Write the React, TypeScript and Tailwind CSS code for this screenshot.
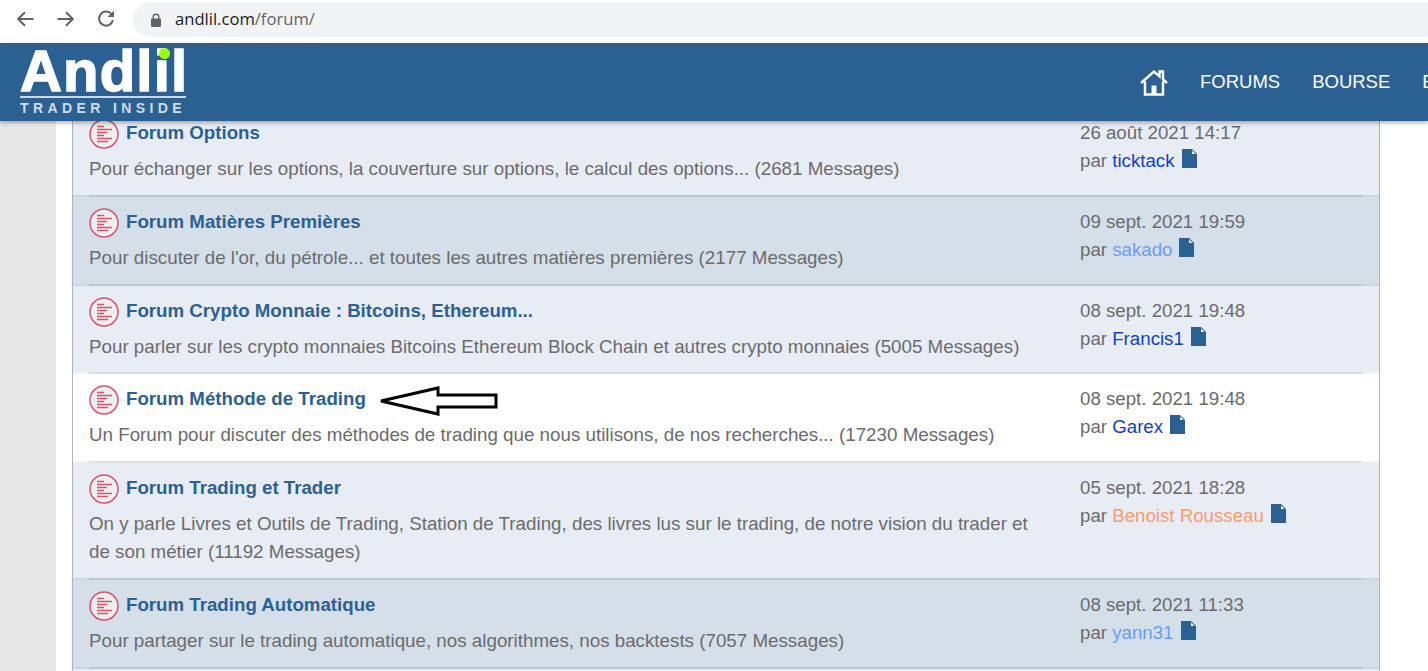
interface ForumRow {
  title: string;
  desc: string;
  date: string;
  user: string;
  userClass: string;
  bg: string;
  line: string;
  edge: string;
  rowHeight: string;
}

const ROWS: ForumRow[] = [
  {
    title: 'Forum Options',
    desc: 'Pour échanger sur les options, la couverture sur options, le calcul des options... (2681 Messages)',
    date: '26 août 2021 14:17',
    user: 'ticktack',
    userClass: 'text-[#1140c8]',
    bg: 'bg-[#e8edf5]',
    line: 'bg-[#b9c7d4]',
    edge: 'bg-[#c9d7e4]',
    rowHeight: 'h-[87px]',
  },
  {
    title: 'Forum Matières Premières',
    desc: "Pour discuter de l'or, du pétrole... et toutes les autres matières premières (2177 Messages)",
    date: '09 sept. 2021 19:59',
    user: 'sakado',
    userClass: 'text-[#6a9bff]',
    bg: 'bg-[#d5dfe9]',
    line: 'bg-[#b9c7d4]',
    edge: 'bg-[#c9d7e4]',
    rowHeight: 'h-[87px]',
  },
  {
    title: 'Forum Crypto Monnaie : Bitcoins, Ethereum...',
    desc: 'Pour parler sur les crypto monnaies Bitcoins Ethereum Block Chain et autres crypto monnaies (5005 Messages)',
    date: '08 sept. 2021 19:48',
    user: 'Francis1',
    userClass: 'text-[#1140c8]',
    bg: 'bg-[#e8edf5]',
    line: 'bg-[#d5dde5]',
    edge: 'bg-[#eef3f7]',
    rowHeight: 'h-[86px]',
  },
  {
    title: 'Forum Méthode de Trading',
    desc: 'Un Forum pour discuter des méthodes de trading que nous utilisons, de nos recherches... (17230 Messages)',
    date: '08 sept. 2021 19:48',
    user: 'Garex',
    userClass: 'text-[#1140c8]',
    bg: 'bg-white',
    line: 'bg-[#dfe3e8]',
    edge: 'bg-[#eef2f7]',
    rowHeight: 'h-[87px]',
  },
  {
    title: 'Forum Trading et Trader',
    desc: 'On y parle Livres et Outils de Trading, Station de Trading, des livres lus sur le trading, de notre vision du trader et de son métier (11192 Messages)',
    date: '05 sept. 2021 18:28',
    user: 'Benoist Rousseau',
    userClass: 'text-[#ff9a6e]',
    bg: 'bg-[#e8edf5]',
    line: 'bg-[#b9c7d4]',
    edge: 'bg-[#c9d7e4]',
    rowHeight: 'h-[115px]',
  },
  {
    title: 'Forum Trading Automatique',
    desc: 'Pour partager sur le trading automatique, nos algorithmes, nos backtests (7057 Messages)',
    date: '08 sept. 2021 11:33',
    user: 'yann31',
    userClass: 'text-[#6a9bff]',
    bg: 'bg-[#d5dfe9]',
    line: 'bg-[#b9c7d4]',
    edge: 'bg-[#c9d7e4]',
    rowHeight: 'h-[87px]',
  },
];

const ForumIcon = () => (
  <svg width="30" height="30" viewBox="0 0 30 30" className="shrink-0 mt-[2px]">
    <circle cx="15" cy="15" r="14" fill="#eeeeee" stroke="#d5546f" strokeWidth="1.5" />
    <path d="M8 7.5h7M8 10.5h15M8 13.5h10M8 16.5h7M8 19.5h15M8 22.5h11" stroke="#d5546f" strokeWidth="1.3" />
  </svg>
);

const FileIcon = () => (
  <svg width="15" height="19" viewBox="0 0 15 19" className="shrink-0 -mt-[5px]">
    <path d="M0 0h10l5 5v14H0z" fill="#2b6192" />
    <path d="M10 1.5 13.5 5H10z" fill="#ffffff" />
  </svg>
);

const HomeIcon = () => (
  <svg width="28" height="27" viewBox="0 0 28 27" className="shrink-0">
    <path
      d="M1 14 14 2.5l5.5 4.8V2.5h3.5v7.9L27 14M5 12.5V25.5h18V12.5"
      fill="none"
      stroke="#ffffff"
      strokeWidth="2.4"
    />
    <path d="M11.5 16.5h5v9h-5z" fill="#ffffff" />
  </svg>
);

const Row = ({ row }: { row: ForumRow }) => (
  <div className={`flex flex-col ${row.bg}`}>
    <div className={`flex ${row.rowHeight}`}>
      <div className="w-[1007px] pl-4 pr-[45px] pt-[10px]">
        <div className="flex items-center gap-[7px] h-[30px]">
          <ForumIcon />
          <a className="text-[18.7px] font-bold text-[#2b6192] leading-[24px]">{row.title}</a>
        </div>
        <p className="mt-[7px] text-[18.77px] leading-[28px]">{row.desc}</p>
      </div>
      <div className="pt-[11px] text-[18.7px] leading-[28px]">
        <div>{row.date}</div>
        <div className="flex items-center gap-[7px]">
          <span>
            par <span className={row.userClass}>{row.user}</span>
          </span>
          <FileIcon />
        </div>
      </div>
    </div>
    <div className={`h-[2px] ${row.edge}`}>
      <div className={`h-[2px] ml-4 mr-4 ${row.line}`} />
    </div>
  </div>
);

const App = () => {
  return (
    <div className="w-[1428px] h-[671px] overflow-hidden bg-white font-['Liberation_Sans',Arial,sans-serif] text-[#6b6b6b]">
      {/* browser bar */}
      <div className="h-[43px] flex items-start bg-white pl-4 pt-[2px]">
        <svg width="18" height="16" viewBox="0 0 18 16" className="mt-[9px] shrink-0">
          <path d="M17.5 8H2.5M9 1.2 2.2 8 9 14.8" fill="none" stroke="#5f6368" strokeWidth="2" />
        </svg>
        <svg width="18" height="16" viewBox="0 0 18 16" className="mt-[9px] ml-[23px] shrink-0">
          <path d="M0.5 8H15.5M9 1.2 15.8 8 9 14.8" fill="none" stroke="#5f6368" strokeWidth="2" />
        </svg>
        <svg width="18" height="18" viewBox="0 0 18 18" className="mt-[8px] ml-[22px] shrink-0">
          <path d="M14.5 4.2A7 7 0 1 0 15.9 10" fill="none" stroke="#5f6368" strokeWidth="2" />
          <path d="M17 0.5V7h-6.5z" fill="#5f6368" />
        </svg>
        <div className="ml-[18px] flex-1 h-[35px] rounded-l-full bg-[#f1f3f4] flex items-center pl-[18px]">
          <svg width="10" height="14" viewBox="0 0 10 14" className="shrink-0">
            <path d="M2.2 6V4a2.8 2.8 0 0 1 5.6 0v2" fill="none" stroke="#5f6368" strokeWidth="1.4" />
            <rect x="0" y="5.5" width="10" height="8.5" rx="1" fill="#5f6368" />
          </svg>
          <span className="ml-[14px] font-['Open_Sans',sans-serif] text-[16.6px] text-[#202124]">
            andlil.com<span className="text-[#5f6368]">/forum/</span>
          </span>
        </div>
      </div>

      {/* site nav */}
      <div className="relative z-10 h-[78px] bg-[#2b6192] shadow-[0_2px_4px_rgba(0,0,0,0.3)] flex">
        <div className="relative ml-5 w-[170px] shrink-0 text-white">
          <div className="h-[53px] pt-[4px] text-[58px] font-bold leading-[47px] tracking-[1.2px] [-webkit-text-stroke:1.5px_white] whitespace-nowrap">
            Andlil
          </div>
          <span className="absolute left-[139px] top-[5px] w-[11px] h-[11px] rounded-full bg-[#9cff00]" />
          <div className="h-[2px] w-[166px] bg-[#c9d8e6]" />
          <div className="mt-[3px] text-[14px] font-bold leading-[14px] tracking-[4.4px] text-[#cfdde9] whitespace-nowrap">
            TRADER INSIDE
          </div>
        </div>
        <div className="ml-[950px] flex items-center gap-[32px] text-[18.5px] text-white whitespace-nowrap">
          <HomeIcon />
          <span>FORUMS</span>
          <span>BOURSE</span>
          <span>BLOG</span>
        </div>
      </div>

      {/* forum list */}
      <div className="flex h-[550px]">
        <div className="w-[56px] bg-[#e8e8e8]" />
        <div className="w-[16px]" />
        <div className="w-[1308px] border-x border-[#b0b4b9] bg-[#e8edf5]">
          <div className="relative -mt-[13px]">
            {ROWS.map((row) => (
              <Row key={row.title} row={row} />
            ))}
            <svg width="120" height="30" viewBox="0 0 120 30" className="absolute left-[306px] top-[278px]">
              <path d="M2 15 59 2v7h58v12H59v7z" fill="#ffffff" stroke="#000000" strokeWidth="3" />
            </svg>
          </div>
        </div>
      </div>
    </div>
  );
};

export default App;
